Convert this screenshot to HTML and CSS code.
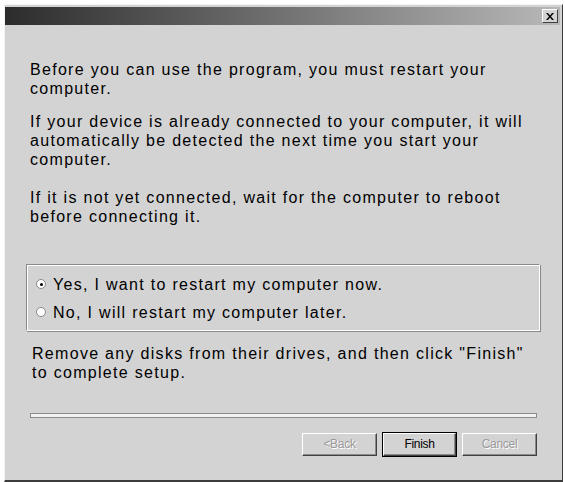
FILE: index.html
```html
<!DOCTYPE html>
<html>
<head>
<meta charset="utf-8">
<link rel="stylesheet" href="styles.css">
</head>
<body>
<div class="window">
  <div class="titlebar">
    <div class="close"><svg width="8" height="7" viewBox="0 0 8 7"><path d="M0 0h2l2 2.5L6 0h2L5 3.5 8 7H6L4 4.5 2 7H0l3-3.5z" fill="#000"/></svg></div>
  </div>
  <div class="content">
    <p class="p1">Before you can use the program, you must restart your computer.</p>
    <p class="p2">If your device is already connected to your computer, it will automatically be detected the next time you start your computer.</p>
    <p class="p3">If it is not yet connected, wait for the computer to reboot before connecting it.</p>
    <div class="group">
      <div class="radio"><span class="dot on"></span>Yes, I want to restart my computer now.</div>
      <div class="radio"><span class="dot"></span>No, I will restart my computer later.</div>
    </div>
    <p class="p4">Remove any disks from their drives, and then click "Finish" to complete setup.</p>
    <div class="sep"></div>
    <div class="buttons">
      <div class="btn disabled">&lt;Back</div>
      <div class="btn default">Finish</div>
      <div class="btn disabled">Cancel</div>
    </div>
  </div>
</div>
</body>
</html>
```
FILE: styles.css
```css
html, body { margin: 0; padding: 0; background: #fff; }
body { width: 565px; height: 482px; overflow: hidden; font-family: "Liberation Sans", Arial, sans-serif; }
.window {
  margin: 4px 0 0 4px;
  width: 557px;
  height: 475px;
  background: #d3d3d3;
  border-top: 1px solid #f4f4f4;
  border-left: 1px solid #f4f4f4;
  border-right: 1px solid #3c3c3c;
  border-bottom: 2px solid #3c3c3c;
  box-sizing: content-box;
}
.titlebar {
  margin: 2px 2px 0 0;
  height: 18px;
  background: linear-gradient(to right, #2c2c2c, #b8b8b8);
  display: flex;
  justify-content: flex-end;
  align-items: center;
  padding-right: 2px;
}
.close {
  width: 14px; height: 12px;
  background: #d3d3d3;
  border-top: 1px solid #fff; border-left: 1px solid #fff;
  border-right: 1px solid #404040; border-bottom: 1px solid #404040;
  display: flex; align-items: center; justify-content: center;
}
.content { padding: 35px 0 0 25px; font-size: 16px; line-height: 19px; letter-spacing: 1.3px; color: #000; }
p { margin: 0; width: 505px; }
.p2 { margin-top: 14px; }
.p3 { margin-top: 19px; }
.group {
  margin-top: 38px;
  margin-left: -4px;
  width: 514px;
  height: 67px;
  border-top: 1px solid #8a8a8a; border-left: 1px solid #8a8a8a;
  border-right: 1px solid #fff; border-bottom: 1px solid #fff;
  box-shadow: inset 1px 1px 0 #fff, 1px 1px 0 #8a8a8a;
  padding-top: 5px;
  box-sizing: border-box;
}
.radio { display: flex; align-items: center; height: 28px; padding-left: 9px; }
.dot {
  width: 10px; height: 10px; border-radius: 50%; background: #fff;
  border: 1px solid #8a8a8a; margin-right: 7px; position: relative; box-sizing: border-box;
}
.dot.on::after { content: ""; position: absolute; left: 3px; top: 3px; width: 3px; height: 3px; background: #000; border-radius: 50%; }
.p4 { margin-top: 13px; margin-left: 2px; }
.sep {
  margin-top: 31px; width: 507px; height: 5px; box-sizing: border-box;
  border: 1px solid #8c8c8c;
  background: #f2f2f2;
}
.buttons { display: flex; justify-content: flex-end; gap: 5px; width: 507px; margin-top: 15px; letter-spacing: -0.3px; }
.btn {
  width: 75px; height: 23px; box-sizing: border-box;
  display: flex; align-items: center; justify-content: center;
  font-size: 12px; background: #d3d3d3;
  border-top: 1px solid #fff; border-left: 1px solid #fff;
  border-right: 1px solid #404040; border-bottom: 1px solid #404040;
  box-shadow: inset -1px -1px 0 #8a8a8a;
}
.btn.disabled { color: #9a9a9a; text-shadow: 1px 1px 0 #fff; }
.btn.default { outline: 1px solid #000; width: 73px; margin: 0 1px; }
```
